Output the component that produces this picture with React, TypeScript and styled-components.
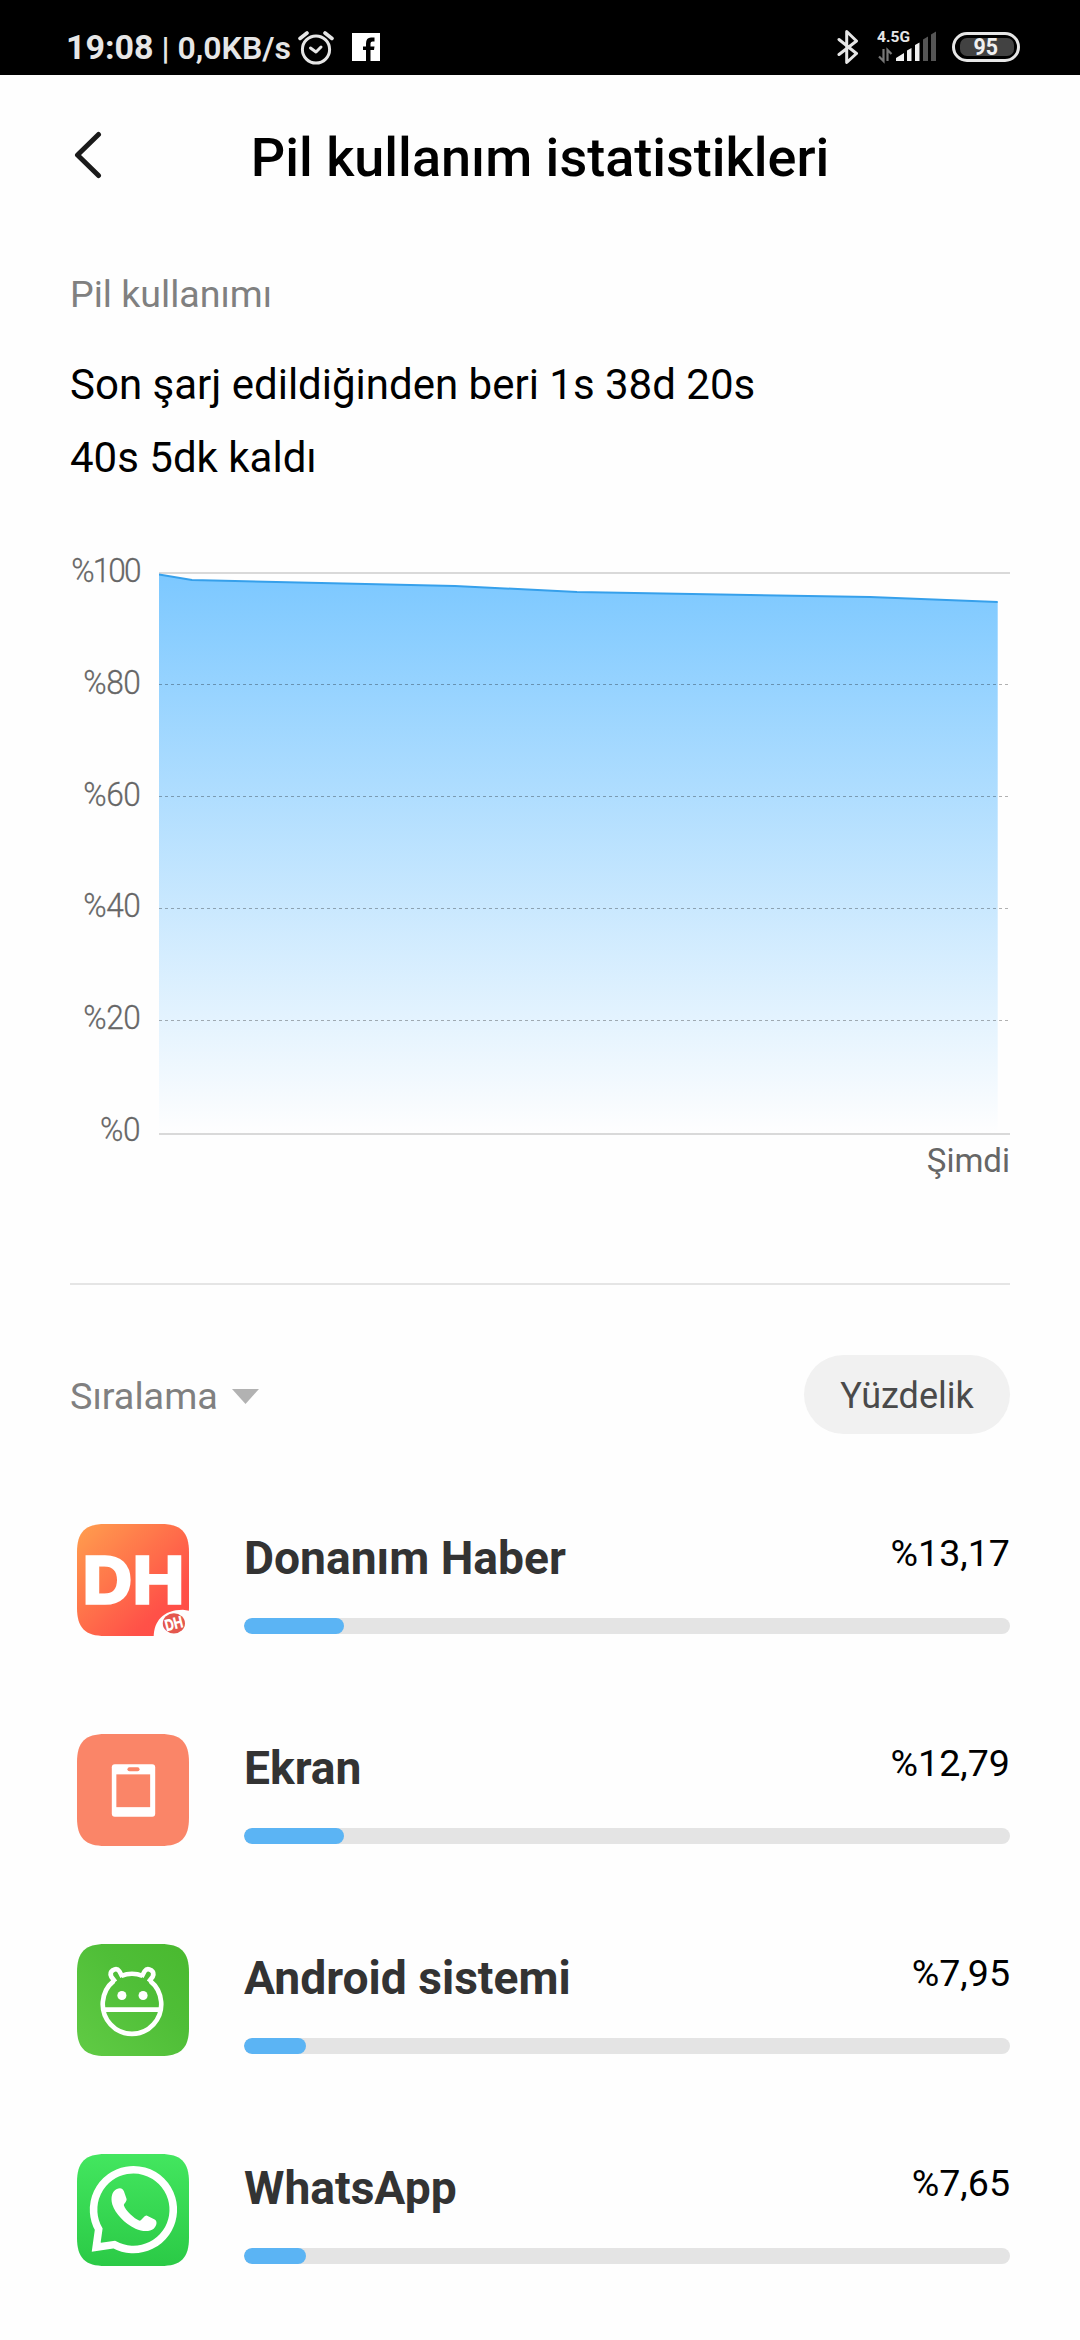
import React from 'react';
import styled, { createGlobalStyle } from 'styled-components';

const GlobalStyle = createGlobalStyle`
  * { box-sizing: border-box; }
  body { margin: 0; background: #fefefe; font-family: Roboto, "Noto Sans", sans-serif; }
`;

const Screen = styled.div`
  width: 1080px;
  height: 2340px;
  overflow: hidden;
  background: #fefefe;
  color: #000;
`;

const StatusBar = styled.header`
  height: 75px;
  padding: 18px 60px 0 66px;
  background: #000;
  color: #e6e6e6;
  display: flex;
  justify-content: space-between;
`;

const StatusGroup = styled.div`
  display: flex;
  align-items: flex-start;
  height: 57px;
`;

const Clock = styled.span`
  width: 227px;
  font-size: 34px;
  line-height: 58px;
  height: 57px;
  white-space: pre;
  font-weight: 700;
`;

const NetSpeed = styled.span`
  font-size: 32px;
  font-weight: 600;
`;

const TitleBar = styled.div`
  height: 166px;
  padding: 0 72px;
  display: grid;
  grid-template-columns: 60px 1fr 60px;
  align-items: center;
`;

const BackButton = styled.div`
  height: 54px;
  svg { display: block; }
`;

const Title = styled.h1`
  margin: 0;
  text-align: center;
  font-size: 54px;
  line-height: 64px;
  font-weight: 500;
  white-space: nowrap;
`;

const Content = styled.main`
  padding: 0 70px;
`;

const SectionLabel = styled.div`
  padding-top: 29px;
  height: 105px;
  font-size: 37.6px;
  line-height: 48px;
  color: #808080;
`;

const Summary = styled.p`
  margin: 0;
  height: 73px;
  font-size: 42px;
  line-height: 78px;
  white-space: nowrap;
`;

const Chart = styled.section`
  margin-top: 59px;
  height: 732px;
  display: grid;
  grid-template-columns: 89px 1fr;
  grid-template-rows: 589px 1fr;
`;

const Axis = styled.div`
  grid-row: 1 / 3;
  display: flex;
  flex-direction: column;
  padding-right: 19px;
  align-items: flex-end;
`;

const Tick = styled.span<{ $spacing: number }>`
  height: 111.8px;
  flex: none;
  font-size: 34px;
  line-height: 39px;
  letter-spacing: ${(p) => p.$spacing}px;
  color: #666;
  font-weight: 300;
  -webkit-text-stroke: 0.3px #666;
  transform: scaleX(0.93);
  transform-origin: right;
`;

const PlotArea = styled.div`
  padding-top: 20px;
  svg { display: block; }
`;

const NowLabel = styled.div`
  grid-column: 2;
  text-align: right;
  font-size: 33px;
  line-height: 41px;
  color: #666;
`;

const Divider = styled.hr`
  margin: 0;
  border: 0;
  height: 2px;
  background: #e5e5e5;
`;

const Toolbar = styled.div`
  margin-top: 70px;
  height: 79px;
  display: flex;
  align-items: center;
  justify-content: space-between;
`;

const SortButton = styled.div`
  display: flex;
  align-items: center;
  gap: 14px;
  font-size: 37.8px;
  line-height: 48px;
  padding-top: 3px;
  color: #808080;
`;

const Pill = styled.div`
  width: 206px;
  height: 79px;
  border-radius: 40px;
  background: #f1f1f1;
  color: #4a4a4a;
  font-size: 36px;
  line-height: 82px;
  text-align: center;
`;

const List = styled.div`
  padding-top: 90px;
`;

const Row = styled.div`
  height: 210px;
  display: grid;
  grid-template-columns: 174px 1fr;
`;

const IconCell = styled.div`
  padding-left: 7px;
`;

const RowBody = styled.div`
  display: flex;
  flex-direction: column;
`;

const RowHead = styled.div`
  height: 94px;
  display: flex;
  justify-content: space-between;
`;

const AppName = styled.span`
  font-size: 46.2px;
  line-height: 54px;
  padding-top: 7px;
  font-weight: 700;
  color: #333;
`;

const Percent = styled.span`
  font-size: 37.6px;
  line-height: 46px;
  padding-top: 6px;
  color: #000;
`;

const Track = styled.div`
  height: 16px;
  border-radius: 8px;
  background: #e4e4e4;
  overflow: hidden;
`;

const Fill = styled.div<{ $width: number }>`
  width: ${(p) => p.$width}px;
  height: 100%;
  border-radius: 8px;
  background: #5bb4f4;
`;

const tile = 'M28 0H83C103 0 111 8 111 28V83C111 103 103 111 83 111H28C8 111 0 103 0 83V28C0 8 8 0 28 0Z';

const LogoText = styled.text`
  font-family: Inter, Roboto, sans-serif;
  font-weight: 800;
`;

const DhIcon = () => (
  <svg width="112" height="112" viewBox="0 0 111 111">
    <defs>
      <linearGradient id="dh" x1="0" y1="0" x2="1" y2="1">
        <stop offset="0" stopColor="#ff9f4e" />
        <stop offset=".75" stopColor="#ff5148" />
        <stop offset="1" stopColor="#ff4b46" />
      </linearGradient>
    </defs>
    <path d={tile} fill="url(#dh)" />
    <LogoText x="5.500" y="79.500" fontSize="65" textLength="101" lengthAdjust="spacingAndGlyphs" fill="#fff" stroke="#fff" strokeWidth="1.500">DH</LogoText>
    <path d="M76 112C76 98 84 85 105 85L112 86V112Z" fill="#fefefe" />
    <ellipse cx="96" cy="98.500" rx="11" ry="10" fill="#e4574e" />
    <LogoText x="87" y="104.500" fontSize="16" textLength="18" lengthAdjust="spacingAndGlyphs" fill="#fff" transform="rotate(-14 96 99)">DH</LogoText>
  </svg>
);

const ScreenIcon = () => (
  <svg width="112" height="112" viewBox="0 0 111 111">
    <path d={tile} fill="#fa8568" />
    <rect x="34.500" y="30" width="43" height="52" rx="3" fill="#fff" />
    <rect x="39" y="40" width="33.500" height="32.500" fill="#fa8568" />
    <rect x="50" y="33" width="12" height="4" rx="2" fill="#fa8568" />
  </svg>
);

const AndroidIcon = () => (
  <svg width="112" height="112" viewBox="0 0 111 111">
    <defs>
      <linearGradient id="droid" x1="0" y1="1" x2="1" y2="0">
        <stop offset="0" stopColor="#61cb45" />
        <stop offset=".6" stopColor="#4fbe37" />
        <stop offset="1" stopColor="#49b92f" />
      </linearGradient>
    </defs>
    <path d={tile} fill="url(#droid)" />
    <g fill="none" stroke="#fff" strokeWidth="4.600" strokeLinejoin="round">
      <path d="M44 31.500Q49 29.500 54.500 29.500Q60 29.500 65 31.500M36.500 36.500A29 29.500 0 1 0 72.500 36.500" />
      <path d="M38 37.500L34 32.500Q32 28.500 35.500 26Q39.500 23.500 42 27L45 32.500M71 37.500L75 32.500Q77 28.500 73.500 26Q69.500 23.500 67 27L64 32.500" />
      <path d="M27 65H82" />
    </g>
    <circle cx="44.500" cy="51" r="4.500" fill="#fff" />
    <circle cx="65.500" cy="51" r="4.500" fill="#fff" />
  </svg>
);

const WhatsAppIcon = () => (
  <svg width="112" height="112" viewBox="0 0 111 111">
    <defs>
      <linearGradient id="wa" x1="0" y1="0" x2="0" y2="1">
        <stop offset="0" stopColor="#43e65f" />
        <stop offset="1" stopColor="#2bca46" />
      </linearGradient>
    </defs>
    <path d={tile} fill="url(#wa)" />
    <path d="M21.500 74.500A39.500 39.500 0 1 1 37 89.800L19 92.500Z" fill="none" stroke="#fff" strokeWidth="7.500" />
    <path d="M39 35C43 33 45 34 46.500 37L49 44C50 47 46 49 46.500 51C48 56 57 64 61.500 66C64 67 66 61 69 61L77 65C80 67 79 71 76 74C72 77 65 77 58 74C47 69 38 59 35 50C33 43 35 37 39 35Z" fill="#fff" />
  </svg>
);

const rows = [
  { name: 'Donanım Haber', percent: '%13,17', width: 100, icon: <DhIcon /> },
  { name: 'Ekran', percent: '%12,79', width: 100, icon: <ScreenIcon /> },
  { name: 'Android sistemi', percent: '%7,95', width: 62, icon: <AndroidIcon /> },
  { name: 'WhatsApp', percent: '%7,65', width: 62, icon: <WhatsAppIcon /> },
];

const AlarmIcon = () => (
  <svg width="36" height="36" viewBox="0 0 36 36" fill="none" stroke="#e6e6e6" strokeWidth="3" strokeLinecap="round">
    <circle cx="18" cy="20.500" r="13.600" />
    <path d="M12.500 19L18 23L23 18" strokeLinejoin="round" />
    <path d="M2 9.500L9 4M27 4L34 9.500" strokeWidth="3.600" />
  </svg>
);

const FacebookIcon = () => (
  <svg width="28" height="28" viewBox="0 0 28 28">
    <path d="M0 0H28V28H0Z" fill="#fff" />
    <path d="M14 28V17H11V13.500H14V10.500Q14 4.500 19 4.500H22.500V8.500H20.500Q18.500 8.500 18.500 10.500V13.500H22.500L22 17H18.500V28Z" fill="#000" />
  </svg>
);

const StatusIcon = styled.div<{ $left?: number; $top?: number }>`
  margin-left: ${(p) => p.$left ?? 0}px;
  padding-top: ${(p) => p.$top ?? 0}px;
  svg { display: block; }
`;

const BarText = styled.text`
  font-family: Roboto, sans-serif;
  font-weight: 700;
`;

const Bluetooth = () => (
  <svg width="22" height="36" viewBox="0 0 22 36" fill="none" stroke="#e6e6e6" strokeWidth="3" strokeLinejoin="round" strokeLinecap="round">
    <path d="M2 10.500L19.500 24.500L9.700 33.500V2.500L19.500 12L2 25.500" />
  </svg>
);

const Signal = () => (
  <svg width="60" height="42" viewBox="0 -8 60 42">
    <BarText x="0" y="11.700" fontSize="15.500" textLength="33" fill="#e6e6e6">4.5G</BarText>
    <path d="M2 26.500L6.500 31V19M10.500 31V20L14.500 24" fill="none" stroke="#777" strokeWidth="2.200" />
    <path d="M19 31V28L27 23V31ZM30 31V20.500L34.500 18V31ZM38 31V15L42.500 12.500V31Z" fill="#f2f2f2" />
    <path d="M46 31V9.500L51 6.500V31ZM54 31V4.500L59 1.500V31Z" fill="#555" />
  </svg>
);

const Battery = () => (
  <svg width="68" height="30" viewBox="0 0 68 30">
    <rect x="1.500" y="1.500" width="65" height="27" rx="13.500" fill="none" stroke="#e6e6e6" strokeWidth="3" />
    <rect x="8" y="6" width="54" height="18" rx="7" fill="#424242" />
    <BarText x="21.500" y="23.400" fontSize="23" textLength="24.500" lengthAdjust="spacingAndGlyphs" fill="#f0f0f0">95</BarText>
  </svg>
);

const BackIcon = () => (
  <svg width="30" height="48" viewBox="0 0 30 48" fill="none" stroke="#1a1a1a" strokeWidth="5" strokeLinecap="round" strokeLinejoin="round">
    <path d="M26.500 3.500L5.500 24L26.500 44.500" />
  </svg>
);

const Plot = () => (
  <svg width="851" height="566" viewBox="159 571 851 566">
    <defs>
      <linearGradient id="area" x1="0" y1="574" x2="0" y2="1133" gradientUnits="userSpaceOnUse">
        <stop offset="0" stopColor="#7cc8ff" />
        <stop offset="1" stopColor="#fefefe" />
      </linearGradient>
    </defs>
    <path d="M159 572H1010V574H159Z" fill="#d9d9d9" />
    <path d="M159 574.500L192 580L455 586L577 592L870 597L997.700 602V1133H159Z" fill="url(#area)" />
    <path d="M159 574.500L192 580L455 586L577 592L870 597L997.700 602" fill="none" stroke="#36a0eb" strokeWidth="2" />
    <path d="M159 684.500H1010M159 796.500H1010M159 908.500H1010M159 1020.500H1010" stroke="#000" strokeOpacity=".3" strokeDasharray="3 3" />
    <path d="M159 1133H1010V1135H159Z" fill="#d9d9d9" />
  </svg>
);

export default function App() {
  return (
    <Screen>
      <GlobalStyle />
      <StatusBar>
        <StatusGroup>
          <Clock>19:08<NetSpeed> | 0,0KB/s</NetSpeed></Clock>
          <StatusIcon $left={5} $top={11}><AlarmIcon /></StatusIcon>
          <StatusIcon $left={18} $top={15}><FacebookIcon /></StatusIcon>
        </StatusGroup>
        <StatusGroup>
          <StatusIcon $top={11}><Bluetooth /></StatusIcon>
          <StatusIcon $left={18} $top={4}><Signal /></StatusIcon>
          <StatusIcon $left={15} $top={14}><Battery /></StatusIcon>
        </StatusGroup>
      </StatusBar>
      <TitleBar>
        <BackButton><BackIcon /></BackButton>
        <Title>Pil kullanım istatistikleri</Title>
      </TitleBar>
      <Content>
        <SectionLabel>Pil kullanımı</SectionLabel>
        <Summary>Son şarj edildiğinden beri 1s 38d 20s</Summary>
        <Summary>40s 5dk kaldı</Summary>
        <Chart>
          <Axis>
            {[100, 80, 60, 40, 20, 0].map((v) => (
              <Tick key={v} $spacing={v === 100 ? -2 : -0.5}>%{v}</Tick>
            ))}
          </Axis>
          <PlotArea><Plot /></PlotArea>
          <NowLabel>Şimdi</NowLabel>
        </Chart>
        <Divider />
        <Toolbar>
          <SortButton>
            Sıralama
            <svg width="27" height="15" viewBox="0 0 27 15"><path d="M0 0H27L13.500 15Z" fill="#b2b2b2" /></svg>
          </SortButton>
          <Pill>Yüzdelik</Pill>
        </Toolbar>
        <List>
          {rows.map((r) => (
            <Row key={r.name}>
              <IconCell>{r.icon}</IconCell>
              <RowBody>
                <RowHead>
                  <AppName>{r.name}</AppName>
                  <Percent>{r.percent}</Percent>
                </RowHead>
                <Track><Fill $width={r.width} /></Track>
              </RowBody>
            </Row>
          ))}
        </List>
      </Content>
    </Screen>
  );
}
